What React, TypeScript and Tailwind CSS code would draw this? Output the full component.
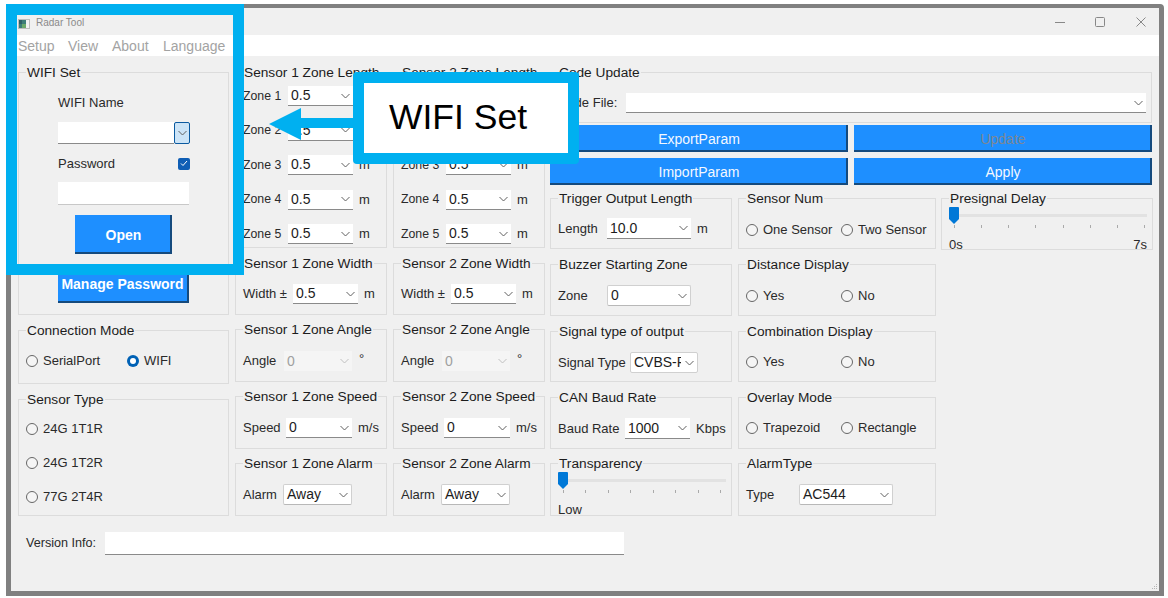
import React from "react";

const Chevron = ({ color = "#606060" }: { color?: string }) => (
  <svg width="9" height="6" viewBox="0 0 9 6" fill="none" className="shrink-0">
    <path d="M0.5 1L4.5 5L8.5 1" stroke={color} strokeWidth="1" />
  </svg>
);

const Group = ({
  title,
  className,
  children,
}: {
  title: string;
  className: string;
  children?: React.ReactNode;
}) => (
  <div className={`relative border border-[#dcdcdc] ${className}`}>
    <span className="absolute -top-2 left-[7px] bg-[#f0f0f0] px-px text-[13.7px] leading-4 whitespace-nowrap text-[#1c1c1c]">
      {title}
    </span>
    {children}
  </div>
);

const Combo = ({
  value,
  className,
  boxed,
  disabled,
}: {
  value?: string;
  className: string;
  boxed?: boolean;
  disabled?: boolean;
}) => (
  <div
    className={`flex h-5 shrink-0 items-center justify-between overflow-hidden pr-[3px] pl-[3px] text-[14px] ${className} ${
      disabled ? "bg-[#f5f5f5] text-[#a0a0a0]" : "bg-white text-[#1c1c1c]"
    } ${boxed ? "rounded-[2px] border border-[#d0d0d0] border-b-[#b8b8b8]" : disabled ? "" : "border-b border-[#8a8a8a]"}`}
  >
    <span className="whitespace-nowrap">{value}</span>
    <Chevron color={disabled ? "#c0c0c0" : "#606060"} />
  </div>
);

const Radio = ({ label, className, checked }: { label: string; className: string; checked?: boolean }) => (
  <div className={`flex items-center gap-[5px] text-[13px] text-[#2a2a2a] ${className}`}>
    {checked ? (
      <span className="flex h-3 w-3 items-center justify-center rounded-full bg-[#0061b5]">
        <span className="h-[6px] w-[6px] rounded-full bg-white" />
      </span>
    ) : (
      <span className="h-3 w-3 rounded-full border border-[#666] bg-[#f5f5f5]" />
    )}
    <span className="whitespace-nowrap">{label}</span>
  </div>
);

const Blue = ({ label, className }: { label: string; className: string }) => (
  <button
    className={`flex items-center justify-center border-r-2 border-b-2 border-[#154a7d] bg-[#1e8fff] text-[14px] ${className}`}
  >
    {label}
  </button>
);

const Slider = ({ width, ticks }: { width: string; ticks: string }) => (
  <div className={`relative ml-[7px] h-[17px] ${width}`}>
    <div className="absolute top-[7px] right-0 left-0 h-[3px] bg-[#e2e2e2]" />
    <svg width="10" height="17" viewBox="0 0 10 17" className="absolute top-0 left-0">
      <path d="M0 1Q0 0 1 0H9Q10 0 10 1V12L5 17L0 12Z" fill="#0078d7" />
    </svg>
    <div className={`absolute top-[18px] left-[5px] flex justify-between ${ticks}`}>
      {[0, 1, 2, 3, 4, 5, 6, 7].map((t) => (
        <span key={t} className="h-[3px] w-px bg-[#aaa]" />
      ))}
    </div>
  </div>
);

const Label = ({ text, className }: { text: string; className: string }) => (
  <span className={`shrink-0 text-[13px] whitespace-nowrap text-[#2a2a2a] ${className}`}>{text}</span>
);

const ZoneRows = () => (
  <div className="flex flex-col gap-[14.5px] pt-[13px] pl-[7px]">
    {[1, 2, 3, 4, 5].map((z) => (
      <div key={z} className="flex items-center">
        <span className="w-[45px] shrink-0 text-[12.3px] whitespace-nowrap text-[#2a2a2a]">Zone {z}</span>
        <Combo value="0.5" className="w-[65px]" />
        <Label text="m" className="ml-[6px]" />
      </div>
    ))}
  </div>
);

const SensorColumn = ({ n }: { n: number }) => (
  <div className="flex w-[152px] shrink-0 flex-col">
    <Group title={`Sensor ${n} Zone Length`} className="h-[176px]">
      <ZoneRows />
    </Group>
    <Group title={`Sensor ${n} Zone Width`} className="mt-[15px] h-[52px]">
      <div className="flex items-center pt-5 pl-[7px]">
        <Label text="Width ±" className="w-[50px]" />
        <Combo value="0.5" className="w-[65px]" />
        <Label text="m" className="ml-[6px]" />
      </div>
    </Group>
    <Group title={`Sensor ${n} Zone Angle`} className="mt-[14px] h-[53px]">
      <div className="flex items-center pt-[21px] pl-[7px]">
        <Label text="Angle" className="w-[41px]" />
        <Combo value="0" className="w-[68px]" disabled />
        <Label text="°" className="ml-[7px] -translate-y-0.5" />
      </div>
    </Group>
    <Group title={`Sensor ${n} Zone Speed`} className="mt-[14px] h-[53px]">
      <div className="flex items-center pt-[21px] pl-[7px]">
        <Label text="Speed" className="w-[43px]" />
        <Combo value="0" className="w-[66px]" />
        <Label text="m/s" className="ml-[6px]" />
      </div>
    </Group>
    <Group title={`Sensor ${n} Zone Alarm`} className="mt-[14px] h-[53px]">
      <div className="flex items-center pt-5 pl-[7px]">
        <Label text="Alarm" className="w-[40px]" />
        <Combo value="Away" className="h-[21px] w-[69px]" boxed />
      </div>
    </Group>
  </div>
);

export default function App() {
  return (
    <div className="relative h-[598px] w-[1168px] overflow-hidden bg-white pt-1 pl-1.5 font-['Liberation_Sans',Arial,sans-serif]">
      <div className="relative h-[592px] w-[1158px] rounded-tr-[4px] border-[5px] border-t-4 border-[#808080] bg-[#f0f0f0]">
        <div className="flex h-[27px] items-center pt-[2px] pl-[7px]">
          <svg width="12" height="10" viewBox="0 0 12 10" className="mt-[2px] shrink-0">
            <rect width="12" height="10" fill="#bdbdbd" />
            <rect x="1" y="1" width="7" height="8" fill="#3d7d78" />
            <rect x="1" y="1" width="3" height="4" fill="#2f5f66" />
            <rect x="4" y="5" width="4" height="4" fill="#6aa86a" />
            <rect x="8" y="1" width="3" height="8" fill="#f2f2f2" />
          </svg>
          <span className="ml-[6px] text-[10px] text-[#8a8a8a]">Radar Tool</span>
          <div className="-mt-0.5 ml-auto flex items-center pr-[13px]">
            <svg width="10" height="10" viewBox="0 0 10 10" className="mr-[30px]">
              <path d="M0 5.5H10" stroke="#888" />
            </svg>
            <svg width="10" height="10" viewBox="0 0 10 10" className="mr-[31px]">
              <rect x="0.5" y="0.5" width="9" height="9" rx="1" fill="none" stroke="#888" />
            </svg>
            <svg width="10" height="10" viewBox="0 0 10 10">
              <path d="M0.5 0.5L9.5 9.5M9.5 0.5L0.5 9.5" stroke="#888" />
            </svg>
          </div>
        </div>
        <div className="flex h-[21px] items-center bg-white pt-0.5 pl-[7px] text-[14px] text-[#a3a3a3]">
          <span className="w-[50px]">Setup</span>
          <span className="w-[44px]">View</span>
          <span className="w-[51px]">About</span>
          <span>Language</span>
        </div>

        <div className="pt-4 pl-[7px]">
          <div className="flex">
            <div className="flex w-[211px] shrink-0 flex-col">
              <Group title="WIFI Set" className="h-[243px]">
                <div className="flex flex-col pt-[22px] pl-[39px]">
                  <Label text="WIFI Name" className="h-4 leading-4" />
                  <div className="mt-[11px] flex h-[22px] w-[132px]">
                    <div className="w-[116px] border-b border-[#8a8a8a] bg-white" />
                    <div className="flex w-4 items-center justify-center rounded-[2px] border border-[#0b5aa0] bg-[#cce4f7]">
                      <Chevron />
                    </div>
                  </div>
                  <div className="mt-[13px] flex h-[13px] w-[132px] items-center justify-between">
                    <Label text="Password" className="" />
                    <span className="flex h-3 w-3 items-center justify-center rounded-[2px] bg-[#0f5eb5]">
                      <svg width="8" height="7" viewBox="0 0 8 7" fill="none">
                        <path d="M1 3.5L3 5.5L7 1" stroke="#fff" strokeWidth="1" />
                      </svg>
                    </span>
                  </div>
                  <div className="mt-3 h-[23px] w-[131px] border-b border-[#c8c8c8] bg-white" />
                  <Blue label="Open" className="mt-[10px] ml-[17px] h-[39px] w-[97px] pt-1 pl-0.5 font-bold text-white" />
                  <Blue label="Manage Password" className="mt-[11px] h-[38px] w-[131px] pt-0.5 font-bold text-white" />
                </div>
              </Group>
              <Group title="Connection Mode" className="mt-[15px] h-[54px]">
                <div className="flex items-center pt-5 pl-[7px]">
                  <Radio label="SerialPort" className="w-[101px]" />
                  <Radio label="WIFI" className="" checked />
                </div>
              </Group>
              <Group title="Sensor Type" className="mt-[15px] h-[117px]">
                <div className="flex flex-col gap-[18px] pt-[21px] pl-[7px]">
                  <Radio label="24G 1T1R" className="h-4" />
                  <Radio label="24G 1T2R" className="h-4" />
                  <Radio label="77G 2T4R" className="h-4" />
                </div>
              </Group>
            </div>

            <div className="ml-1.5 flex gap-1.5">
              <SensorColumn n={1} />
              <SensorColumn n={2} />
            </div>

            <div className="ml-[5px] w-[602px] shrink-0">
              <Group title="Code Update" className="h-[51px]">
                <div className="flex items-center pt-5 pl-[7px]">
                  <Label text="Code File:" className="w-[68px]" />
                  <Combo className="w-[520px]" />
                </div>
              </Group>
              <div className="mt-0.5 grid grid-cols-[298px_298px] gap-x-1.5 gap-y-1.5">
                <Blue label="ExportParam" className="h-[27px] pt-1 pl-0.5 text-[#f4f8ff]" />
                <Blue label="Update" className="h-[27px] pt-1 pl-0.5 text-[#7d8794]" />
                <Blue label="ImportParam" className="h-[27px] pt-1 pl-0.5 text-[#f4f8ff]" />
                <Blue label="Apply" className="h-[27px] pt-1 pl-0.5 text-[#f4f8ff]" />
              </div>
              <div className="mt-[13px] flex">
                <div className="flex w-[182px] shrink-0 flex-col">
                  <Group title="Trigger Output Length" className="h-[51px]">
                    <div className="flex items-center pt-[19px] pl-[7px]">
                      <Label text="Length" className="w-[49px]" />
                      <Combo value="10.0" className="h-[21px] w-[84px]" />
                      <Label text="m" className="ml-[6px]" />
                    </div>
                  </Group>
                  <Group title="Buzzer Starting Zone" className="mt-[15px] h-[52px]">
                    <div className="flex items-center pt-5 pl-[7px]">
                      <Label text="Zone" className="w-[49px]" />
                      <Combo value="0" className="h-[21px] w-[84px]" boxed />
                    </div>
                  </Group>
                  <Group title="Signal type of output" className="mt-[15px] h-[51px]">
                    <div className="flex items-center pt-5 pl-[7px]">
                      <Label text="Signal Type" className="w-[72px]" />
                      <div className="flex h-[21px] w-[68px] items-center overflow-hidden rounded-[2px] border border-[#d0d0d0] bg-white pl-[3px] text-[14px] text-[#1c1c1c]">
                        <span className="w-[47px] shrink-0 overflow-hidden whitespace-nowrap">CVBS-PAL</span>
                        <span className="ml-1">
                          <Chevron />
                        </span>
                      </div>
                    </div>
                  </Group>
                  <Group title="CAN Baud Rate" className="mt-[15px] h-[52px]">
                    <div className="flex items-center pt-5 pl-[7px]">
                      <Label text="Baud Rate" className="w-[67px]" />
                      <Combo value="1000" className="h-[21px] w-[65px]" />
                      <Label text="Kbps" className="ml-[6px]" />
                    </div>
                  </Group>
                  <Group title="Transparency" className="mt-[14px] h-[53px]">
                    <div className="pt-2">
                      <Slider width="w-[168px]" ticks="w-[158px]" />
                      <Label text="Low" className="mt-[13px] ml-[7px] block leading-4" />
                    </div>
                  </Group>
                </div>

                <div className="ml-1.5 flex w-[198px] shrink-0 flex-col">
                  <Group title="Sensor Num" className="h-[51px]">
                    <div className="flex items-center pt-[21px] pl-[7px]">
                      <Radio label="One Sensor" className="w-[95px]" />
                      <Radio label="Two Sensor" className="" />
                    </div>
                  </Group>
                  <Group title="Distance Display" className="mt-[15px] h-[52px]">
                    <div className="flex items-center pt-[21px] pl-[7px]">
                      <Radio label="Yes" className="w-[95px]" />
                      <Radio label="No" className="" />
                    </div>
                  </Group>
                  <Group title="Combination Display" className="mt-[15px] h-[51px]">
                    <div className="flex items-center pt-5 pl-[7px]">
                      <Radio label="Yes" className="w-[95px]" />
                      <Radio label="No" className="" />
                    </div>
                  </Group>
                  <Group title="Overlay Mode" className="mt-[15px] h-[52px]">
                    <div className="flex items-center pt-5 pl-[7px]">
                      <Radio label="Trapezoid" className="w-[95px]" />
                      <Radio label="Rectangle" className="" />
                    </div>
                  </Group>
                  <Group title="AlarmType" className="mt-[14px] h-[53px]">
                    <div className="flex items-center pt-5 pl-[7px]">
                      <Label text="Type" className="w-[53px]" />
                      <Combo value="AC544" className="h-[21px] w-[94px]" boxed />
                    </div>
                  </Group>
                </div>

                <div className="ml-[5px] w-[212px] shrink-0">
                  <Group title="Presignal Delay" className="h-[52px]">
                    <div className="pt-2">
                      <Slider width="w-[198px]" ticks="w-[191px]" />
                      <div className="mt-[13px] flex w-[205px] justify-between pl-[7px]">
                        <Label text="0s" className="leading-4" />
                        <Label text="7s" className="leading-4" />
                      </div>
                    </div>
                  </Group>
                </div>
              </div>
            </div>
          </div>

          <div className="mt-4 flex items-center pl-2">
            <span className="w-[79px] shrink-0 text-[12.6px] whitespace-nowrap text-[#2a2a2a]">Version Info:</span>
            <div className="h-[23px] w-[519px] border-b border-[#8a8a8a] bg-white" />
          </div>
        </div>

        <svg width="7" height="7" viewBox="0 0 7 7" className="absolute right-[1px] bottom-[1px]" fill="#b5b5b5">
          <rect x="5" y="1" width="1" height="1" />
          <rect x="3" y="3" width="1" height="1" />
          <rect x="5" y="3" width="1" height="1" />
          <rect x="1" y="5" width="1" height="1" />
          <rect x="3" y="5" width="1" height="1" />
          <rect x="5" y="5" width="1" height="1" />
        </svg>
      </div>

      {/* annotation laid over the screenshot */}
      <div className="absolute top-1 left-1.5 h-[271px] w-[238px] border-[11px] border-[#00b0f0]" />
      <svg width="90" height="34" viewBox="0 0 90 34" className="absolute top-[107px] left-[269px]">
        <path d="M0 17L32 1V11H90V21H32V33Z" fill="#00b0f0" />
      </svg>
      <div className="absolute top-[72px] left-[353px] flex h-[92px] w-[226px] items-center rounded-[4px] border-[11px] border-[#00b0f0] bg-white pl-[25px] text-[35.5px] text-black">
        WIFI Set
      </div>
    </div>
  );
}
